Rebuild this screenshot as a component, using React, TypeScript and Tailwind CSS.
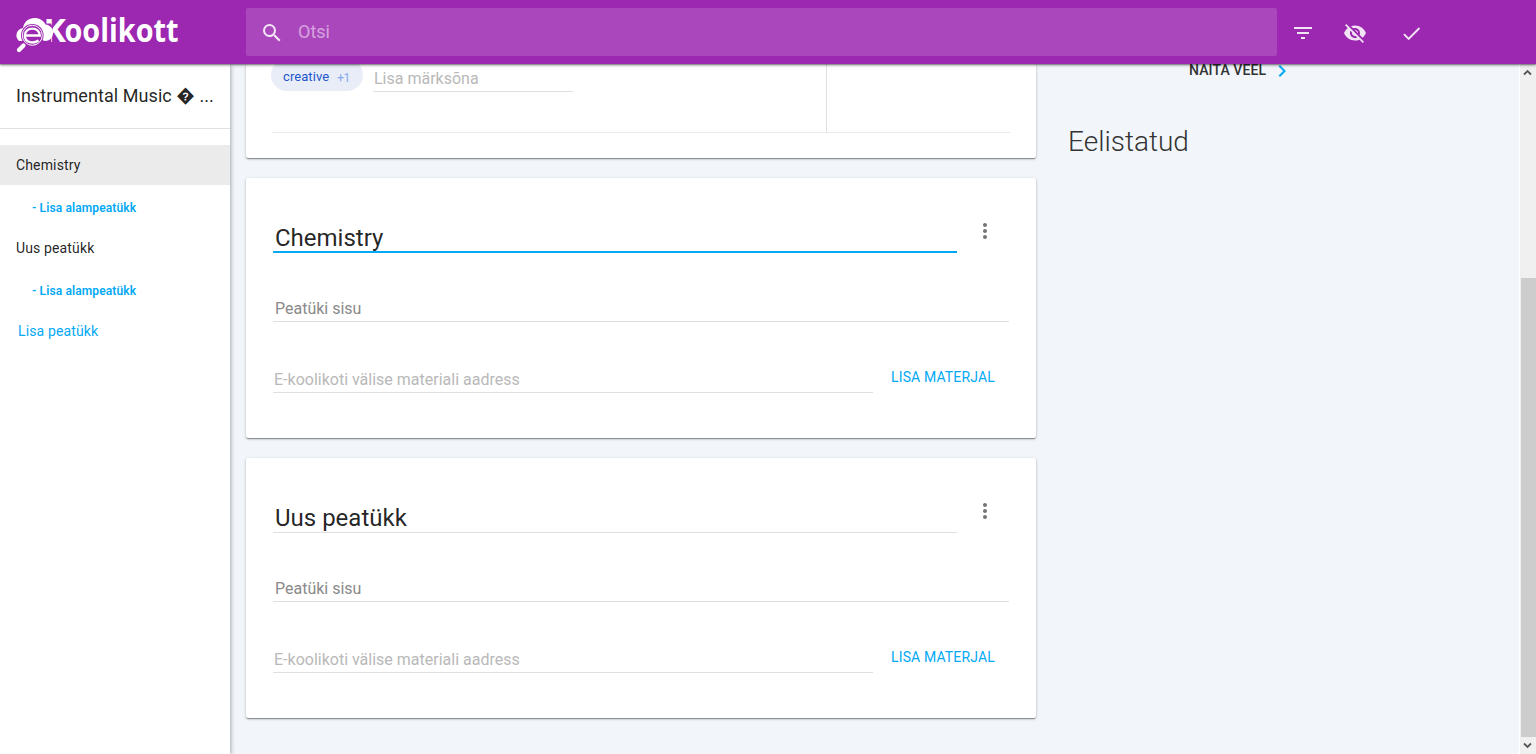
import React from "react";
import { MdSearch, MdFilterList, MdVisibilityOff, MdCheck, MdMoreVert, MdChevronRight } from "react-icons/md";

const cardShadow =
  "bg-white rounded-[2px] shadow-[0_1px_3px_0_rgba(0,0,0,0.25),0_1px_1px_0_rgba(0,0,0,0.2),0_2px_1px_-1px_rgba(0,0,0,0.15)]";

function Logo() {
  return (
    <svg width="220" height="64" viewBox="0 -12 220 64" className="block overflow-visible" aria-label="e-Koolikott">
      <text
        x="27.500"
        y="29.700"
        textLength="22.500"
        lengthAdjust="spacingAndGlyphs"
        fill="#fff"
        className="font-['Open_Sans',sans-serif] text-[33px] font-bold"
      >
        K
      </text>
      <path d="M26 11.500H34.800L36.500 14.500V20L35 26V31H26Z" fill="#9c27b0" />
      <path
        d="M3 29C-1.500 25 0 17 7 16C8 9.500 13 6 18.500 6C23.500 6 27.500 8.500 29.500 12.500C34.500 13 37.500 17 37 21.500C36.700 26 33.500 29 29 29L26 28Z"
        fill="#fff"
      />
      <circle cx="16.300" cy="23.300" r="11.300" fill="#9c27b0" />
      <circle cx="16.300" cy="23.300" r="10" fill="none" stroke="#fff" strokeWidth="1" />
      <path d="M8.800 23.500H23.800C23.800 14.200 8.800 14.200 8.800 23.500C8.800 31 17.500 32 22.500 28.500" fill="none" stroke="#fff" strokeWidth="2.300" />
      <path d="M7.500 33.500L3 38" stroke="#fff" strokeWidth="4.200" strokeLinecap="round" />
      <text
        x="48.500"
        y="29.700"
        textLength="114"
        lengthAdjust="spacingAndGlyphs"
        fill="#fff"
        className="font-['Open_Sans',sans-serif] text-[32px] font-bold"
      >
        oolikott
      </text>
    </svg>
  );
}

function Header() {
  return (
    <header className="relative z-20 flex h-16 shrink-0 items-center bg-[#9c27b0] pl-4 text-white/87 shadow-[0_1px_3px_rgba(0,0,0,0.45),0_1px_1px_rgba(0,0,0,0.2)]">
      <div className="w-[230px]">
        <Logo />
      </div>
      <div className="flex h-12 w-[1031px] items-center rounded-[2px] bg-[#ab47bc] pl-[14px]">
        <MdSearch size={24} className="mt-px" />
        <span className="-mt-px ml-[14px] text-[18px] text-white/50">Otsi</span>
      </div>
      <MdFilterList size={24} className="ml-[14px] mt-[2px]" />
      <MdVisibilityOff size={24} className="ml-7 mt-[2px]" />
      <MdCheck size={23} className="ml-[33px] mt-[2px]" />
    </header>
  );
}

function Sidebar() {
  return (
    <nav className="relative z-10 w-[230px] shrink-0 bg-white text-[14px] tracking-[0.14px] text-black/87 shadow-[0_1px_5px_rgba(0,0,0,0.45)]">
      <div className="flex h-[65px] items-center whitespace-nowrap border-b border-[#e0e0e0] pb-[2px] pl-4 text-[18px] tracking-[0.07px]">
        Instrumental Music � ...
      </div>
      <div className="mt-4 flex h-10 items-center bg-[#ebebeb] pl-4">Chemistry</div>
      <div className="flex h-[46px] items-center pl-8 text-[12px] font-semibold tracking-[0.12px] text-[#03a9f4]">- Lisa alampeatükk</div>
      <div className="flex h-[34px] items-center pl-4">Uus peatükk</div>
      <div className="mt-[3px] flex h-[46px] items-center pl-8 text-[12px] font-semibold tracking-[0.12px] text-[#03a9f4]">- Lisa alampeatükk</div>
      <div className="flex h-[34px] items-center pl-[18px] text-[#03a9f4]">Lisa peatükk</div>
    </nav>
  );
}

function Chapter({ title, focused }: { title: string; focused?: boolean }) {
  return (
    <section className={`${cardShadow} h-[260px] pl-[27px] pt-[45px]`}>
      <div className="flex">
        <div
          className={`flex h-[30px] w-[684px] items-center pl-[2px] text-[24px] text-black/87 ${
            focused ? "border-b-2 border-[#03a9f4] pt-px" : "border-b border-[#dfdfdf]"
          }`}
        >
          {title}
        </div>
        <MdMoreVert size={24} className="-mt-1 ml-4 text-[#757575]" />
      </div>
      <div className="mt-[46px] flex h-[23px] w-[736px] items-center border-b border-[#dfdfdf] pb-[3px] pl-[2px] text-[16px] text-[#8a8a8a]">
        Peatüki sisu
      </div>
      <div className="mt-[43px] flex">
        <div className="flex h-7 w-[600px] items-center border-b border-[#dfdfdf] pl-px pt-[2px] text-[16px] text-[#b9b9b9]">
          E-koolikoti välise materiali aadress
        </div>
        <button className="ml-[18px] h-6 text-[14px] tracking-[0.14px] text-[#03a9f4]">LISA MATERJAL</button>
      </div>
    </section>
  );
}

function Main() {
  return (
    <main className="flex w-[806px] flex-col gap-5 pl-4">
      <section className={`${cardShadow} h-[94px] pl-[26px]`}>
        <div className="flex h-[69px] w-[738px] border-b border-[#e9e9e9]">
          <div className="flex w-[555px] items-start border-r border-[#e0e0e0]">
            <div className="-ml-px -mt-[5px] flex h-8 w-[92px] shrink-0 items-center rounded-full bg-[#e8edf8] pl-3 pt-[3px] text-[13px] tracking-[0.08px] text-[#2255cc]">
              creative
              <span className="ml-2 mt-[2px] text-[12px] tracking-[-0.5px] text-[#86a8ef]">+1</span>
            </div>
            <div className="ml-[10px] flex h-7 w-[200px] items-center border-b border-[#dfdfdf] pl-px pt-[2px] text-[16px] text-[#b9b9b9]">
              Lisa märksõna
            </div>
          </div>
        </div>
      </section>
      <Chapter title="Chemistry" focused />
      <Chapter title="Uus peatükk" />
    </main>
  );
}

function Aside() {
  return (
    <aside className="flex flex-1 flex-col pl-8 text-[#333]">
      <div className="-mt-[6px] flex h-6 items-center pl-[121px] text-[14px] font-medium tracking-[0.1px]">
        NÄITA VEEL
        <MdChevronRight size={24} className="ml-[4px] mt-[2px] text-[#03a9f4]" />
      </div>
      <h2 className="mt-[40px] text-[28px] font-light leading-10">Eelistatud</h2>
    </aside>
  );
}

function Scrollbar() {
  return (
    <div className="flex w-[17px] flex-col items-center border-l border-white bg-[#f0f0f0]">
      <svg width="16" height="17" viewBox="0 0 16 17">
        <path d="M4 10.500L7.500 7L11 10.500" fill="none" stroke="#555" strokeWidth="1.800" />
      </svg>
      <div className="mt-[197px] h-[459px] w-[15px] bg-[#cdcdcd]" />
      <svg width="16" height="17" viewBox="0 0 16 17">
        <path d="M4 6.500L7.500 10L11 6.500" fill="none" stroke="#555" strokeWidth="1.800" />
      </svg>
    </div>
  );
}

export default function App() {
  return (
    <div className="flex h-[754px] w-[1536px] flex-col overflow-hidden bg-[#f2f6fb] font-[Roboto,sans-serif]">
      <Header />
      <div className="flex min-h-0 flex-1">
        <Sidebar />
        <Main />
        <Aside />
        <Scrollbar />
      </div>
    </div>
  );
}
